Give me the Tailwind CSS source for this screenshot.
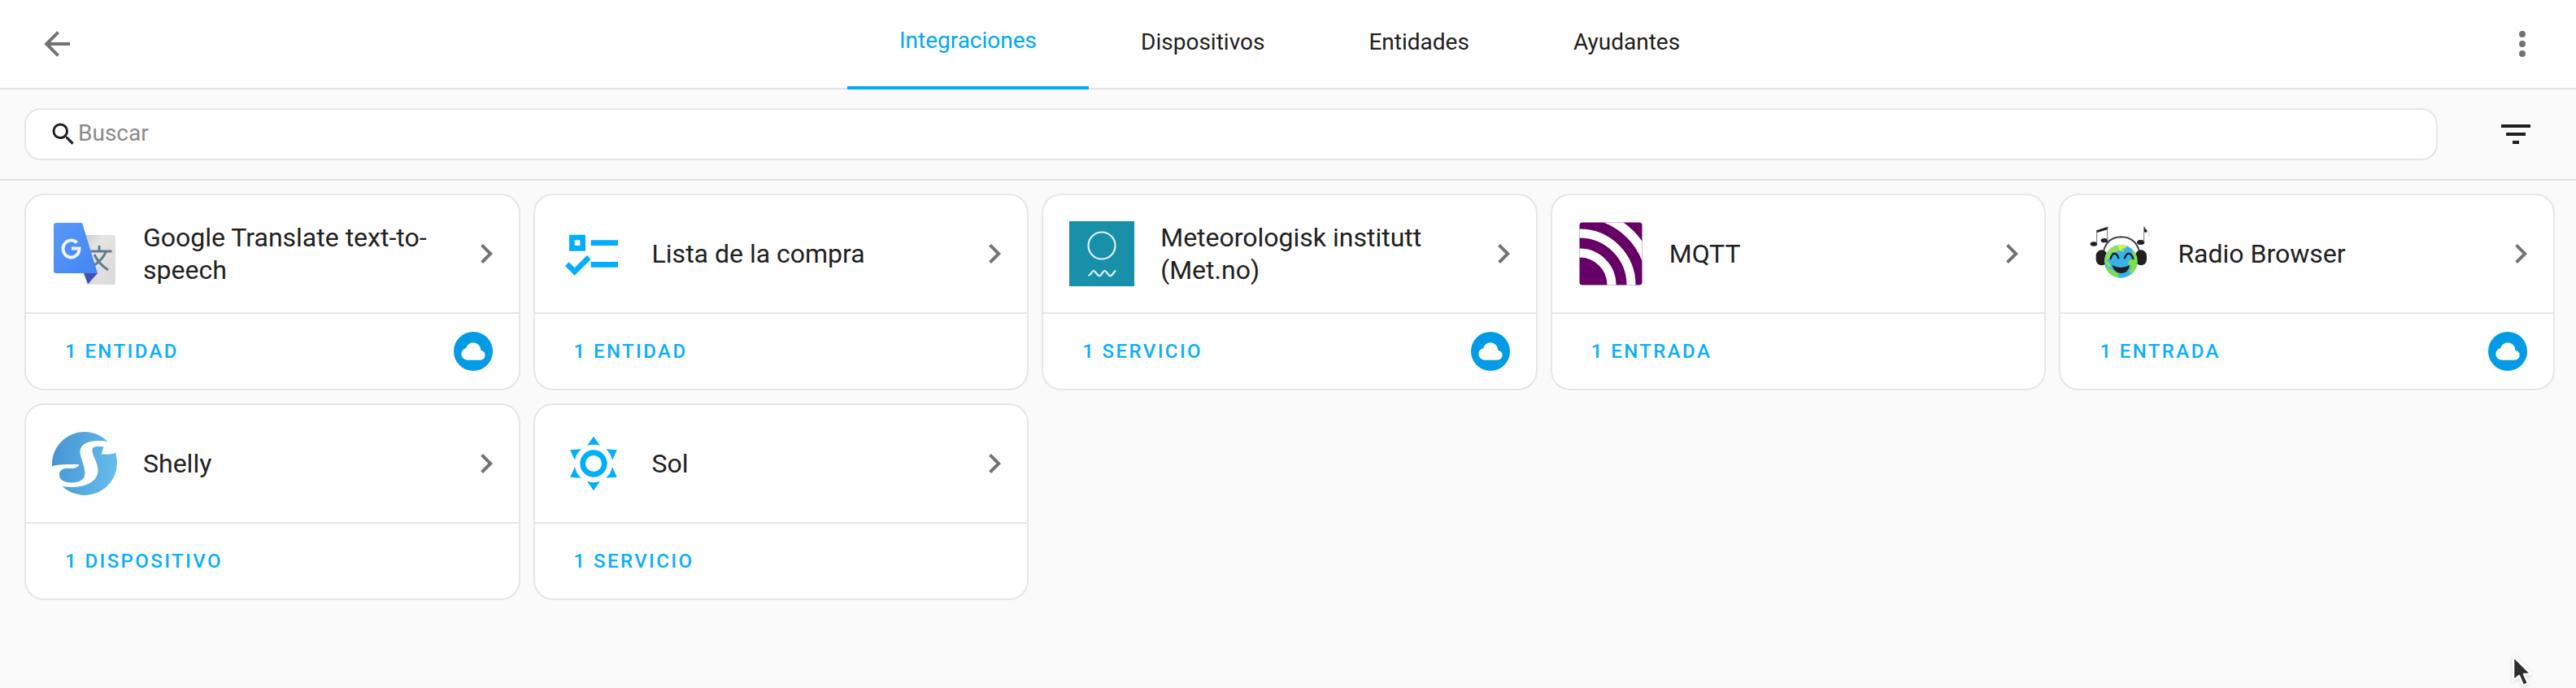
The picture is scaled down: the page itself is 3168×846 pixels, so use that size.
<!DOCTYPE html>
<html lang="es">
<head>
<meta charset="utf-8">
<meta name="viewport" content="width=device-width, initial-scale=1">
<title>Integraciones</title>
<script src="https://cdn.jsdelivr.net/npm/@tailwindcss/browser@4"></script>
</head>
<body class="relative min-h-screen overflow-x-hidden bg-[#fafafa] font-[Roboto,sans-serif] text-[#212121]">

<svg class="hidden" aria-hidden="true">
  <symbol id="chevron" viewBox="0 0 24 24"><path d="M8.59,16.58L13.17,12L8.59,7.41L10,6L16,12L10,18L8.59,16.58Z"/></symbol>
  <symbol id="cloud" viewBox="0 0 24 24"><path d="M6.5 20Q4.22 20 2.61 18.43 1 16.85 1 14.58 1 12.63 2.17 11.1 3.35 9.57 5.25 9.15 5.88 6.85 7.75 5.43 9.63 4 12 4 14.93 4 16.96 6.04 19 8.07 19 11 20.73 11.2 21.86 12.5 23 13.78 23 15.5 23 17.38 21.69 18.69 20.38 20 18.5 20Z"/></symbol>
</svg>

<header class="flex h-[110px] bg-white pl-[46px] pr-[42px] shadow-[inset_0_-2px_0_#e4e4e4]">
  <button type="button" aria-label="Atrás" class="pb-0.5 text-[#737373]">
    <svg class="size-12" viewBox="0 0 24 24" fill="currentColor"><path d="M20,11V13H8L13.5,18.5L12.08,19.92L4.16,12L12.08,4.08L13.5,5.5L8,11H20Z"/></svg>
  </button>
  <nav class="flex flex-1 justify-center text-[28px]">
    <a href="#integraciones" aria-current="page" class="flex items-center border-b-4 border-[#03a9f4] px-16 pb-1.5 text-[#03a9f4]">Integraciones</a>
    <a href="#dispositivos" class="flex items-center px-16 pb-1.5">Dispositivos</a>
    <a href="#entidades" class="flex items-center px-16 pb-1.5">Entidades</a>
    <a href="#ayudantes" class="flex items-center px-16 pb-1.5">Ayudantes</a>
  </nav>
  <button type="button" aria-label="Menú" class="pb-0.5 text-[#737373]">
    <svg class="size-12" viewBox="0 0 24 24" fill="currentColor"><path d="M12,16A2,2 0 0,1 14,18A2,2 0 0,1 12,20A2,2 0 0,1 10,18A2,2 0 0,1 12,16M12,10A2,2 0 0,1 14,12A2,2 0 0,1 12,14A2,2 0 0,1 10,12A2,2 0 0,1 12,10M12,4A2,2 0 0,1 14,6A2,2 0 0,1 12,8A2,2 0 0,1 10,6A2,2 0 0,1 12,4Z"/></svg>
  </button>
</header>

<div class="flex h-28 items-center gap-[72px] border-b-2 border-[#e2e2e2] pl-[30px] pr-[50px]">
  <label class="flex h-16 flex-1 items-center rounded-[20px] border-2 border-[#e6e6e6] bg-white px-7">
    <svg class="size-9 shrink-0" viewBox="0 0 24 24" fill="currentColor" aria-hidden="true"><path d="M9.5,3A6.5,6.5 0 0,1 16,9.5C16,11.11 15.41,12.59 14.44,13.73L14.71,14H15.5L20.5,19L19,20.5L14,15.5V14.71L13.73,14.44C12.59,15.41 11.11,16 9.5,16A6.5,6.5 0 0,1 3,9.5A6.5,6.5 0 0,1 9.5,3M9.5,5C7,5 5,7 5,9.5C5,12 7,14 9.5,14C12,14 14,12 14,9.5C14,7 12,5 9.5,5Z"/></svg>
    <input type="text" placeholder="Buscar" aria-label="Buscar" class="min-w-0 flex-1 bg-transparent pb-0.5 text-[28px] outline-none placeholder:text-[#8a8a8a]">
  </label>
  <button type="button" aria-label="Filtrar">
    <svg class="size-12" viewBox="0 0 24 24" fill="currentColor"><path d="M6,13H18V11H6M3,6V8H21V6M10,18H14V16H10V18Z"/></svg>
  </button>
</div>

<main class="grid grid-cols-[repeat(auto-fill,minmax(600px,1fr))] gap-4 pl-[30px] pr-[26px] pt-4">

  <article class="rounded-3xl border-2 border-[#e6e6e6] bg-white">
    <div class="flex items-center gap-8 py-8 pl-8 pr-4">
      <svg class="size-20 shrink-0" viewBox="0 0 80 80" aria-hidden="true">
        <defs>
          <linearGradient id="gt-blue" x1="0" y1="0" x2="1" y2="1"><stop offset="0" stop-color="#5a98f8"/><stop offset="1" stop-color="#4285f4"/></linearGradient>
          <linearGradient id="gt-page" x1="0" y1="0" x2="1" y2="1"><stop offset="0" stop-color="#c4c4c4"/><stop offset=".35" stop-color="#e4e4e4"/><stop offset="1" stop-color="#dadada"/></linearGradient>
        </defs>
        <path d="M30 17H75Q78 17 78 20V75Q78 78 75 78H44Z" fill="url(#gt-page)"/>
        <path d="M46 37H73.500M58 30V37M66 38Q62 48 49 56M52 41Q58 53 69 60" fill="none" stroke="#607d8b" stroke-width="3"/>
        <path d="M39 64H56L44 77.500Z" fill="#3f51b5"/>
        <path d="M5 2H37L56 64H5Q2 64 2 61V5Q2 2 5 2Z" fill="url(#gt-blue)"/>
        <path d="M30.500 26.500A10 10.500 0 1 0 33.500 33.500H24" fill="none" stroke="#eef2fb" stroke-width="4"/>
      </svg>
      <h2 class="flex-1 text-[32px] leading-10">Google Translate text-to-speech</h2>
      <svg class="size-12 shrink-0 fill-[#737373]" aria-hidden="true"><use href="#chevron"/></svg>
    </div>
    <div class="flex h-[94px] items-center justify-between border-t-2 border-[#e6e6e6] px-8">
      <a href="#google" class="px-4 text-2xl font-medium tracking-widest text-[#0caffb]">1 ENTIDAD</a>
      <span class="flex size-12 items-center justify-center rounded-full bg-[#039be5]" role="img" aria-label="Nube"><svg class="size-8 fill-white"><use href="#cloud"/></svg></span>
    </div>
  </article>

  <article class="rounded-3xl border-2 border-[#e6e6e6] bg-white">
    <div class="flex items-center gap-8 py-8 pl-8 pr-4">
      <svg class="size-20 shrink-0 fill-[#00aeff]" viewBox="0 0 24 24" aria-hidden="true"><path d="M3,5H9V11H3V5M5,7V9H7V7H5M11,7H21V9H11V7M11,15H21V17H11V15M5,20L1.500,16.500L2.910,15.090L5,17.170L9.590,12.590L11,14L5,20Z"/></svg>
      <h2 class="flex-1 text-[32px] leading-10">Lista de la compra</h2>
      <svg class="size-12 shrink-0 fill-[#737373]" aria-hidden="true"><use href="#chevron"/></svg>
    </div>
    <div class="flex h-[94px] items-center justify-between border-t-2 border-[#e6e6e6] px-8">
      <a href="#lista" class="px-4 text-2xl font-medium tracking-widest text-[#0caffb]">1 ENTIDAD</a>
    </div>
  </article>

  <article class="rounded-3xl border-2 border-[#e6e6e6] bg-white">
    <div class="flex items-center gap-8 py-8 pl-8 pr-4">
      <svg class="size-20 shrink-0" viewBox="0 0 80 80" fill="none" stroke="#dff1f5" stroke-width="2.200" aria-hidden="true">
        <rect width="80" height="80" fill="#1990aa" stroke="none"/>
        <circle cx="40" cy="30" r="16.500"/>
        <path d="M23.500 67Q26 66 28 62.500Q30 59.500 32 62.500L35 66Q37 68.500 39 66L41.500 62.500Q43.500 59.500 45.500 62.500L48.500 66Q50.500 68.500 52.500 66L57 60.500"/>
      </svg>
      <h2 class="flex-1 text-[32px] leading-10">Meteorologisk institutt (Met.no)</h2>
      <svg class="size-12 shrink-0 fill-[#737373]" aria-hidden="true"><use href="#chevron"/></svg>
    </div>
    <div class="flex h-[94px] items-center justify-between border-t-2 border-[#e6e6e6] px-8">
      <a href="#met" class="px-4 text-2xl font-medium tracking-widest text-[#0caffb]">1 SERVICIO</a>
      <span class="flex size-12 items-center justify-center rounded-full bg-[#039be5]" role="img" aria-label="Nube"><svg class="size-8 fill-white"><use href="#cloud"/></svg></span>
    </div>
  </article>

  <article class="rounded-3xl border-2 border-[#e6e6e6] bg-white">
    <div class="flex items-center gap-8 py-8 pl-8 pr-4">
      <svg class="size-20 shrink-0" viewBox="0 0 80 80" aria-hidden="true">
        <clipPath id="mqtt-clip"><rect x="1.500" y="1.500" width="77" height="77" rx="3.500"/></clipPath>
        <g clip-path="url(#mqtt-clip)">
          <rect width="80" height="80" fill="#660066"/>
          <g fill="none" stroke="#fff">
            <circle cx="1.500" cy="78.500" r="39.500" stroke-width="11"/>
            <circle cx="1.500" cy="78.500" r="63.500" stroke-width="11"/>
            <circle cx="1.500" cy="78.500" r="88.250" stroke-width="11.500"/>
          </g>
        </g>
      </svg>
      <h2 class="flex-1 text-[32px] leading-10">MQTT</h2>
      <svg class="size-12 shrink-0 fill-[#737373]" aria-hidden="true"><use href="#chevron"/></svg>
    </div>
    <div class="flex h-[94px] items-center justify-between border-t-2 border-[#e6e6e6] px-8">
      <a href="#mqtt" class="px-4 text-2xl font-medium tracking-widest text-[#0caffb]">1 ENTRADA</a>
    </div>
  </article>

  <article class="rounded-3xl border-2 border-[#e6e6e6] bg-white">
    <div class="flex items-center gap-8 py-8 pl-8 pr-4">
      <svg class="size-20 shrink-0" viewBox="18 36 240 240" aria-hidden="true">
        <clipPath id="globe"><circle cx="145" cy="184" r="61"/></clipPath>
        <path d="M80 150Q92 95 146 94Q200 95 214 150" fill="none" stroke="#444" stroke-width="6"/>
        <rect x="53" y="142" width="42" height="57" rx="21" fill="#231f20"/>
        <rect x="198" y="142" width="42" height="57" rx="21" fill="#231f20"/>
        <g clip-path="url(#globe)">
          <rect x="80" y="120" width="130" height="130" fill="#38b3ea"/>
          <path d="M84 185Q82 140 118 124L150 120L168 130L158 138L152 150L140 144L128 150L112 150L104 172L92 180L104 192L110 206L96 204Z" fill="#8fe05a"/>
          <path d="M132 122L162 122L166 132L150 136L144 148L136 136Z" fill="#d2f25e"/>
          <path d="M186 140L210 160V200L190 232L176 226L182 204L170 192L176 180L190 176Z" fill="#7be04a"/>
          <path d="M84 200L108 212L138 232L132 250L104 236Z" fill="#7be04a"/>
        </g>
        <g fill="none" stroke="#231f20" stroke-width="7" stroke-linecap="round">
          <path d="M107 174Q112 156 122 155Q132 157 136 172M159 172Q165 156 174 155Q186 158 190 174"/>
        </g>
        <path d="M112 197Q144 217 178 197Q172 228 145 228Q120 227 112 197Z" fill="#231f20"/>
        <g fill="#231f20">
          <ellipse cx="45" cy="120" rx="13" ry="8"/><ellipse cx="84" cy="107" rx="13" ry="8"/>
          <path d="M55 70L97 56V66L55 79Z"/>
          <ellipse cx="218" cy="114" rx="14" ry="9"/>
          <path d="M230 54Q234 64 243 72L238 78L230 76Z"/>
        </g>
        <path d="M56 72V120M95 60V107M230 58V114" stroke="#777" stroke-width="3"/>
        <path d="M242 72Q252 80 249 92" fill="none" stroke="#bbb" stroke-width="2"/>
      </svg>
      <h2 class="flex-1 text-[32px] leading-10">Radio Browser</h2>
      <svg class="size-12 shrink-0 fill-[#737373]" aria-hidden="true"><use href="#chevron"/></svg>
    </div>
    <div class="flex h-[94px] items-center justify-between border-t-2 border-[#e6e6e6] px-8">
      <a href="#radio" class="px-4 text-2xl font-medium tracking-widest text-[#0caffb]">1 ENTRADA</a>
      <span class="flex size-12 items-center justify-center rounded-full bg-[#039be5]" role="img" aria-label="Nube"><svg class="size-8 fill-white"><use href="#cloud"/></svg></span>
    </div>
  </article>

  <article class="rounded-3xl border-2 border-[#e6e6e6] bg-white">
    <div class="flex items-center gap-8 py-8 pl-8 pr-4">
      <svg class="size-20 shrink-0" viewBox="0 0 80 80" aria-hidden="true">
        <linearGradient id="shelly" gradientUnits="userSpaceOnUse" x1="0" y1="30" x2="80" y2="44"><stop offset="0" stop-color="#4695d3"/><stop offset="1" stop-color="#66bdec"/></linearGradient>
        <g fill="url(#shelly)">
          <path d="M0 43.500A40 40 0 0 1 68.500 13C52 10 34 13 34.500 26C35 34 40 42 40.500 52C40.500 60 33 63.500 24 63.500C15 63.500 9 60 9 54C9 48 14 45.500 20 46C27 46.500 32 45 33.500 41C24 41 5 40.500 0 43.500Z"/>
          <path d="M63.500 19.500C62.500 21 62.500 25 60.500 28.500C67 28.500 74 29.500 78 26.500A40 40 0 0 1 12.500 68C34 72 57 65 56.500 48C56 37 50 32 49.500 24C49.500 19 54 18.500 63.500 19.500Z"/>
        </g>
      </svg>
      <h2 class="flex-1 text-[32px] leading-10">Shelly</h2>
      <svg class="size-12 shrink-0 fill-[#737373]" aria-hidden="true"><use href="#chevron"/></svg>
    </div>
    <div class="flex h-[94px] items-center justify-between border-t-2 border-[#e6e6e6] px-8">
      <a href="#shelly-device" class="px-4 text-2xl font-medium tracking-widest text-[#0caffb]">1 DISPOSITIVO</a>
    </div>
  </article>

  <article class="rounded-3xl border-2 border-[#e6e6e6] bg-white">
    <div class="flex items-center gap-8 py-8 pl-8 pr-4">
      <svg class="size-20 shrink-0 fill-[#00aeff]" viewBox="0 0 24 24" aria-hidden="true"><path d="M12,7A5,5 0 0,1 17,12A5,5 0 0,1 12,17A5,5 0 0,1 7,12A5,5 0 0,1 12,7M12,9A3,3 0 0,0 9,12A3,3 0 0,0 12,15A3,3 0 0,0 15,12A3,3 0 0,0 12,9M12,2L14.39,5.42C13.65,5.15 12.84,5 12,5C11.16,5 10.35,5.15 9.61,5.42L12,2M3.34,7L7.5,6.65C6.9,7.16 6.36,7.78 5.94,8.5C5.5,9.24 5.25,10 5.11,10.79L3.34,7M3.36,17L5.12,13.23C5.26,14 5.53,14.78 5.95,15.5C6.37,16.24 6.91,16.86 7.5,17.37L3.36,17M20.65,7L18.88,10.79C18.74,10 18.47,9.23 18.05,8.5C17.63,7.78 17.1,7.15 16.5,6.64L20.65,7M20.64,17L16.5,17.36C17.09,16.85 17.62,16.22 18.04,15.5C18.46,14.77 18.73,14 18.87,13.21L20.64,17M12,22L9.59,18.56C10.33,18.83 11.14,19 12,19C12.82,19 13.63,18.83 14.37,18.56L12,22Z"/></svg>
      <h2 class="flex-1 text-[32px] leading-10">Sol</h2>
      <svg class="size-12 shrink-0 fill-[#737373]" aria-hidden="true"><use href="#chevron"/></svg>
    </div>
    <div class="flex h-[94px] items-center justify-between border-t-2 border-[#e6e6e6] px-8">
      <a href="#sol" class="px-4 text-2xl font-medium tracking-widest text-[#0caffb]">1 SERVICIO</a>
    </div>
  </article>
</main>

<!-- Mouse pointer -->
<svg class="pointer-events-none absolute right-[52px] bottom-0 h-[42px] w-[28px] drop-shadow" viewBox="0 0 28 42" aria-hidden="true">
  <path d="M3 3V33L10 27L15 39L21 36L16 25H25Z" fill="#2e2e2e" stroke="#fff" stroke-width="2.500" stroke-linejoin="round"/>
</svg>
</body>
</html>
